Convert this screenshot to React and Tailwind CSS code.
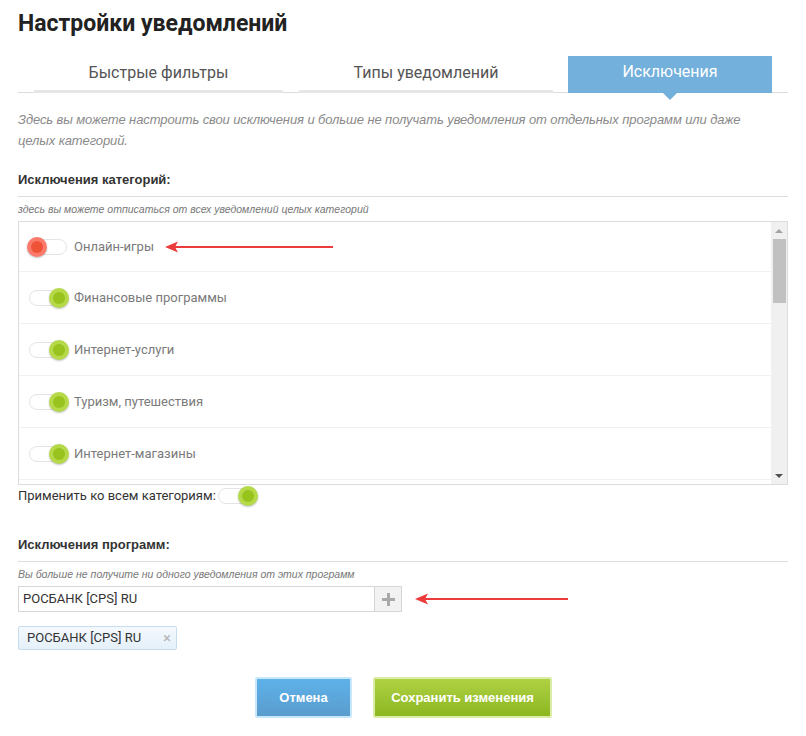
import React from 'react';

const narrow = { fontFamily: '"Liberation Sans Narrow", "Arial Narrow", "Liberation Sans", sans-serif' };

const Toggle = ({ on, red }) => (
  <div className="relative w-[38px] h-[20px] flex items-center shrink-0">
    <div className="w-[38px] h-[16px] rounded-full border border-[#e4e4e4] bg-white" />
    {red ? (
      <div className="absolute left-[-2px] top-[0px] w-[20px] h-[20px] rounded-full bg-[#fb7a6c] flex items-center justify-center shadow-[0_1px_2px_rgba(0,0,0,0.25)]">
        <div className="w-[12px] h-[12px] rounded-full bg-[#ef5337]" />
      </div>
    ) : (
      <div className="absolute right-[-2px] top-[0px] w-[20px] h-[20px] rounded-full bg-[#b6d94a] flex items-center justify-center shadow-[0_1px_2px_rgba(0,0,0,0.25)]">
        <div className="w-[12px] h-[12px] rounded-full bg-[#98c21d]" />
      </div>
    )}
  </div>
);

const Arrow = ({ width }) => (
  <svg width={width} height="12" viewBox={`0 0 ${width} 12`}>
    <path d="M0 6 L13 0.5 L10 6 L13 11.5 Z" fill="#ec3b3b" />
    <rect x="9" y="5" width={width - 9} height="2" fill="#ec3b3b" />
  </svg>
);

const categories = [
  { name: 'Онлайн-игры', on: false },
  { name: 'Финансовые программы', on: true },
  { name: 'Интернет-услуги', on: true },
  { name: 'Туризм, путешествия', on: true },
  { name: 'Интернет-магазины', on: true },
];

export default function App() {
  return (
    <div className="w-[806px] h-[736px] bg-white px-[18px] pt-[9px] text-[#333]" style={{ fontFamily: 'Roboto, "Liberation Sans", sans-serif' }}>
      <h1 className="text-[23px] font-bold text-[#222] leading-[30px]">Настройки уведомлений</h1>

      {/* tabs */}
      <div className="mt-[17px] flex items-end border-b border-[#dcdcdc]">
        <div className="ml-[16px] w-[249px] h-[37px] flex items-center justify-center text-[16px] text-[#555] border-b-[3px] border-[#e6e6e6] mb-[-1px]">
          Быстрые фильтры
        </div>
        <div className="ml-[16px] w-[254px] h-[37px] flex items-center justify-center text-[16px] text-[#555] border-b-[3px] border-[#e6e6e6] mb-[-1px]">
          Типы уведомлений
        </div>
        <div className="relative ml-[15px] w-[204px] h-[37px] flex items-center justify-center text-[16px] text-white bg-[#74b0dc] mb-[-1px] pb-[6px]">
          Исключения
          <div className="absolute left-[95px] bottom-[-7px] w-0 h-0 border-l-[7px] border-r-[7px] border-t-[7px] border-l-transparent border-r-transparent border-t-[#74b0dc]" />
        </div>
      </div>

      <p className="mt-[16px] max-w-[748px] text-[13px] italic text-[#8a8a8a] leading-[21px] tracking-[-0.1px]" style={narrow}>
        Здесь вы можете настроить свои исключения и больше не получать уведомления от отдельных программ или даже целых категорий.
      </p>

      <div className="mt-[21px] text-[13px] font-bold text-[#333] leading-[16px] pb-[8px] border-b border-[#dddddd]" style={narrow}>
        Исключения категорий:
      </div>
      <div className="mt-[4px] text-[10.5px] italic text-[#777] leading-[16px]" style={narrow}>
        здесь вы можете отписаться от всех уведомлений целых категорий
      </div>

      <div className="mt-[4px] h-[264px] border border-[#dcdcdc] flex">
        <div className="flex-1 flex flex-col">
          {categories.map((c, i) => (
            <div key={c.name} className={`flex items-center pl-[10px] border-b border-[#f0f0f0] ${i === 0 ? 'h-[50px]' : 'h-[52px]'}`}>
              <Toggle on={c.on} red={!c.on} />
              <span className="ml-[7px] text-[13px] text-[#7a7a7a]">{c.name}</span>
              {i === 0 && (
                <div className="ml-[11px] flex items-center">
                  <Arrow width={168} />
                </div>
              )}
            </div>
          ))}
        </div>
        <div className="w-[16px] bg-[#f0f0f0] flex flex-col items-center">
          <div className="h-[17px] flex items-center justify-center">
            <div className="w-0 h-0 border-l-[4px] border-r-[4px] border-b-[4px] border-l-transparent border-r-transparent border-b-[#a3a3a3]" />
          </div>
          <div className="w-[13px] h-[64px] bg-[#c1c1c1]" />
          <div className="flex-1" />
          <div className="h-[17px] flex items-center justify-center">
            <div className="w-0 h-0 border-l-[4px] border-r-[4px] border-t-[4px] border-l-transparent border-r-transparent border-t-[#505050]" />
          </div>
        </div>
      </div>

      <div className="mt-[1px] flex items-center h-[20px]">
        <span className="text-[13px] text-[#333]">Применить ко всем категориям:</span>
        <div className="ml-[2px]">
          <Toggle on />
        </div>
      </div>

      <div className="mt-[31px] text-[13px] font-bold text-[#333] leading-[16px] pb-[8px] border-b border-[#dddddd]" style={narrow}>
        Исключения программ:
      </div>
      <div className="mt-[4px] text-[10.5px] italic text-[#777] leading-[16px]" style={narrow}>
        Вы больше не получите ни одного уведомления от этих программ
      </div>

      <div className="mt-[4px] flex items-center">
        <div className="w-[357px] h-[26px] border border-[#d6d6d6] flex items-center pl-[4px] text-[13px] text-[#333]">
          РОСБАНК [CPS] RU
        </div>
        <div className="w-[27px] h-[26px] border border-l-0 border-[#d6d6d6] bg-[#f2f2f2] flex items-center justify-center">
          <svg width="13" height="13" viewBox="0 0 13 13">
            <rect x="5" y="0" width="3" height="13" fill="#a9a9a9" />
            <rect x="0" y="5" width="13" height="3" fill="#a9a9a9" />
          </svg>
        </div>
        <div className="ml-[13px] flex items-center">
          <Arrow width={153} />
        </div>
      </div>

      <div className="mt-[14px] inline-flex items-center h-[24px] border border-[#c7dcec] rounded-[2px] bg-gradient-to-b from-[#f4f9fd] to-[#e5f0fa]">
        <span className="pl-[8px] pr-[22px] text-[13px] text-[#333]">РОСБАНК [CPS] RU</span>
        <span className="pr-[5px] text-[15px] text-[#b5b5b5] leading-none">×</span>
      </div>

      <div className="mt-[27px] flex gap-[21px] pl-[237px]">
        <button className="w-[97px] h-[41px] rounded-[2px] border-2 border-[#c9e7fa] bg-gradient-to-b from-[#5db2ea] to-[#5a9ccd] text-white text-[13px] font-bold" style={narrow}>
          Отмена
        </button>
        <button className="w-[179px] h-[41px] rounded-[2px] border-2 border-[#dbeba8] bg-gradient-to-b from-[#afd142] to-[#8cb720] text-white text-[13px] font-bold" style={narrow}>
          Сохранить изменения
        </button>
      </div>
    </div>
  );
}
